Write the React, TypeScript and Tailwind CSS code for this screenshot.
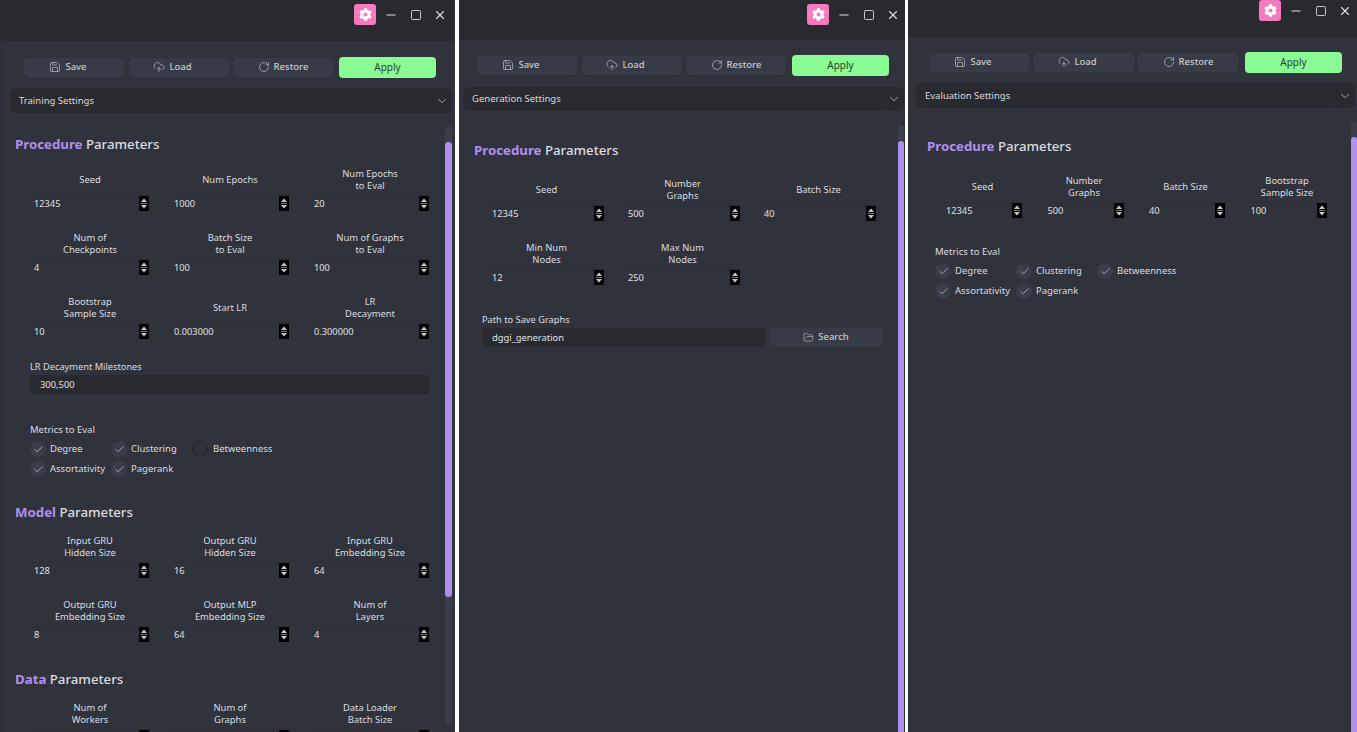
import { Check, ChevronDown, CloudUpload, FolderOpen, Minus, RotateCw, Save, Square, X } from 'lucide-react'
import { FaCog } from 'react-icons/fa'

const FONT = "font-['Noto_Sans',sans-serif]"

type Field = { label: string[]; value: string }

function Spinner() {
  return (
    <svg viewBox="0 0 10 15" className="mr-px h-[15px] w-[10px] shrink-0 bg-black">
      <path d="M5 2.5 8 6H2z" fill="#c8c8c8" />
      <path d="M2 7.5h6" stroke="#777" strokeWidth="1" />
      <path d="M5 12.5 8 9H2z" fill="#c8c8c8" />
    </svg>
  )
}

function NumberField({ label, value }: Field) {
  return (
    <div className="flex flex-col">
      <div className="flex h-6 flex-col items-center justify-center text-center text-[9.4px] leading-3 text-[#dcdde0]">
        {label.map((line) => (
          <span key={line}>{line}</span>
        ))}
      </div>
      <div className="mt-[3px] flex h-4 items-center justify-between border-t border-[#2c2f37] pl-1 text-[9.25px] text-[#e0e1e3]">
        <span>{value}</span>
        <Spinner />
      </div>
    </div>
  )
}

function Heading({ accent, className = '' }: { accent: string; className?: string }) {
  return (
    <h2 className={`h-5 text-[13.25px] leading-5 font-medium text-[#dcdde0] ${className}`}>
      <span className="font-bold text-[#b18ff0]">{accent}</span> Parameters
    </h2>
  )
}

function ToolButton({ icon, label, className = '' }: { icon: JSX.Element; label: string; className?: string }) {
  return (
    <button className={`flex h-[19px] w-[100px] items-center justify-center gap-1 rounded bg-[#373b47] pb-px text-[9.5px] font-medium text-[#c9cacd] ${className}`}>
      {icon}
      {label}
    </button>
  )
}

function Toolbar({ className, applyClass = 'ml-[1.5px]' }: { className: string; applyClass?: string }) {
  return (
    <div className={`flex items-center gap-[4.5px] ${className}`}>
      <ToolButton icon={<Save size={12} strokeWidth={1.3} />} label="Save" className="pr-[12px]" />
      <ToolButton icon={<CloudUpload size={12} strokeWidth={1.3} />} label="Load" className="pr-[12px]" />
      <ToolButton icon={<RotateCw size={12} strokeWidth={1.3} />} label="Restore" />
      <button className={`flex h-[21px] w-[97px] items-center justify-center rounded-sm bg-[#89fc93] text-[10px] text-[#2b3b30] ${applyClass}`}>
        Apply
      </button>
    </div>
  )
}

function TitleBar({ className }: { className: string }) {
  return (
    <div className={`flex shrink-0 justify-end bg-[#282a2f] text-[#e2e2e4] ${className}`}>
      <div className="flex h-[21px] w-[22px] items-center justify-center rounded-[3px] bg-[#f57ac0]">
        <FaCog size={13} color="#ffffff" />
      </div>
      <div className="ml-2 flex h-[21px] items-center gap-[10.5px]">
        <Minus size={14} strokeWidth={2} />
        <Square size={12} strokeWidth={1.7} className="mx-px" />
        <X size={14} strokeWidth={1.9} />
      </div>
    </div>
  )
}

function Combo({ label, className }: { label: string; className: string }) {
  return (
    <div className={`flex shrink-0 items-center rounded-md bg-[#282a2f] text-[9.5px] text-[#d8d9dc] ${className}`}>
      <span className="flex-1 pt-px pl-[9px]">{label}</span>
      <span className="flex h-full w-[22px] items-center justify-center border-l border-[#2c2f35]">
        <ChevronDown size={14} strokeWidth={1.3} className="text-[#d0d1d4]" />
      </span>
    </div>
  )
}

function Metric({ label, checked = true }: { label: string; checked?: boolean }) {
  return (
    <div className="flex h-4 items-center gap-1 text-[9.5px] text-[#dcdde0]">
      {checked ? (
        <span className="flex h-4 w-4 items-center justify-center rounded-full bg-[#393d49]">
          <Check size={11} strokeWidth={1.3} className="text-[#f0f0f2]" />
        </span>
      ) : (
        <span className="mr-px h-4 w-4 rounded-full border-2 border-[#292c33]" />
      )}
      <span className="whitespace-nowrap">{label}</span>
    </div>
  )
}

function Metrics({ betweenness = true, className }: { betweenness?: boolean; className: string }) {
  return (
    <div className={className}>
      <p className="h-3 text-[9.5px] leading-3 text-[#dcdde0]">Metrics to Eval</p>
      <div className="mt-[5px] grid grid-cols-[81px_81px_81px] gap-y-1">
        <Metric label="Degree" />
        <Metric label="Clustering" />
        <Metric label="Betweenness" checked={betweenness} />
        <Metric label="Assortativity" />
        <Metric label="Pagerank" />
      </div>
    </div>
  )
}

// overlay scrollbar, sits on top of the scroll area
function Scrollbar({ className, thumb }: { className: string; thumb: string }) {
  return (
    <div className={`absolute rounded-full bg-[#3a3e49] ${className}`}>
      <div className={`w-full rounded-full bg-[#b18ff0] ${thumb}`} />
    </div>
  )
}

const f = (label: string, value: string): Field => ({ label: label.split('|'), value })

const procedureTraining = [
  f('Seed', '12345'), f('Num Epochs', '1000'), f('Num Epochs|to Eval', '20'),
  f('Num of|Checkpoints', '4'), f('Batch Size|to Eval', '100'), f('Num of Graphs|to Eval', '100'),
  f('Bootstrap|Sample Size', '10'), f('Start LR', '0.003000'), f('LR|Decayment', '0.300000'),
]
const model = [
  f('Input GRU|Hidden Size', '128'), f('Output GRU|Hidden Size', '16'), f('Input GRU|Embedding Size', '64'),
  f('Output GRU|Embedding Size', '8'), f('Output MLP|Embedding Size', '64'), f('Num of|Layers', '4'),
]
const data = [f('Num of|Workers', ''), f('Num of|Graphs', ''), f('Data Loader|Batch Size', '')]
const generation = [
  f('Seed', '12345'), f('Number|Graphs', '500'), f('Batch Size', '40'),
  f('Min Num|Nodes', '12'), f('Max Num|Nodes', '250'),
]
const evaluation = [f('Seed', '12345'), f('Number|Graphs', '500'), f('Batch Size', '40'), f('Bootstrap|Sample Size', '100')]

function Fields({ items, className }: { items: Field[]; className: string }) {
  return (
    <div className={`grid gap-y-[21px] ${className}`}>
      {items.map((item) => (
        <NumberField key={item.label.join()} {...item} />
      ))}
    </div>
  )
}

function TrainingWindow() {
  return (
    <section className="flex h-full w-[455px] shrink-0 flex-col bg-[#30333c] shadow-[inset_3px_0_0_#2e3039]">
      <TitleBar className="h-[41px] pt-1 pr-2" />
      <Toolbar className="pt-4 pl-6" />
      <Combo label="Training Settings" className="mt-[10px] mr-[3px] ml-[10px] h-[25px]" />
      <div className="relative min-h-0 flex-1 overflow-hidden">
        <Heading accent="Procedure" className="mt-[21px] ml-[15px]" />
        <Fields items={procedureTraining} className="mt-[14px] ml-[30px] w-[400px] grid-cols-[120px_120px_120px] gap-x-5" />
        <div className="mt-[22px] ml-[30px] w-[400px]">
          <p className="h-3 text-[9.25px] leading-3 text-[#dcdde0]">LR Decayment Milestones</p>
          <div className="mt-[2px] flex h-[19px] items-center rounded bg-[#282a2f] pt-px pl-[10px] text-[9.35px] text-[#e0e1e3]">300,500</div>
        </div>
        <Metrics betweenness={false} className="mt-[30px] ml-[30px]" />
        <Heading accent="Model" className="mt-[25px] ml-[15px]" />
        <Fields items={model} className="mt-[13px] ml-[30px] w-[400px] grid-cols-[120px_120px_120px] gap-x-5" />
        <Heading accent="Data" className="mt-[27px] ml-[15px]" />
        <Fields items={data} className="mt-[13px] ml-[30px] w-[400px] grid-cols-[120px_120px_120px] gap-x-5" />
        <Scrollbar className="top-[13px] right-[3px] h-[599px] w-[7px]" thumb="mt-4 h-[455px]" />
      </div>
    </section>
  )
}

function GenerationWindow() {
  return (
    <section className="ml-1 flex h-full w-[446px] shrink-0 flex-col bg-[#30333c]">
      <TitleBar className="h-10 pt-1 pr-[5px]" />
      <Toolbar className="pt-[15px] pl-[18px]" />
      <Combo label="Generation Settings" className="mt-[11px] mr-px ml-1 h-6" />
      <div className="relative min-h-0 flex-1 overflow-hidden">
        <Heading accent="Procedure" className="mt-[29px] ml-[15px]" />
        <Fields items={generation} className="mt-[18px] ml-[29px] w-[389px] grid-cols-[117px_117px_117px] gap-x-[19px]" />
        <div className="mt-[29px] ml-[23px] w-[401px]">
          <p className="h-3 text-[9.25px] leading-3 text-[#dcdde0]">Path to Save Graphs</p>
          <div className="mt-[2px] flex gap-1">
            <div className="flex h-[19px] w-[283px] items-center rounded bg-[#282a2f] pt-px pl-[10px] text-[9.35px] text-[#e0e1e3]">dggi_generation</div>
            <button className="flex h-[19px] w-[114px] items-center justify-center gap-1 rounded bg-[#373b47] text-[9.5px] font-medium text-[#c9cacd]">
              <FolderOpen size={11} strokeWidth={1.3} />
              Search
            </button>
          </div>
        </div>
        <Scrollbar className="top-[14px] right-[1px] bottom-[7px] w-[6px]" thumb="mt-4 h-full" />
      </div>
    </section>
  )
}

function EvaluationWindow() {
  return (
    <section className="ml-[3px] flex h-full w-[449px] shrink-0 flex-col bg-[#30333c]">
      <TitleBar className="h-[37px] pr-[5px]" />
      <Toolbar className="pt-[15px] pl-[21px]" applyClass="ml-[2.5px]" />
      <Combo label="Evaluation Settings" className="mt-[10px] mr-[2px] ml-2 h-[25px] pt-px" />
      <div className="relative min-h-0 flex-1 overflow-hidden">
        <Heading accent="Procedure" className="mt-[28px] ml-[19px]" />
        <Fields items={evaluation} className="mt-[19px] ml-[34px] w-[385px] grid-cols-[81px_81px_81px_81px] gap-x-[20.5px]" />
        <Metrics className="mt-[28px] ml-[27px]" />
        <Scrollbar className="top-[13px] right-0 bottom-[7px] w-[6px]" thumb="mt-4 h-full" />
      </div>
    </section>
  )
}

export default function App() {
  return (
    <div className={`flex h-[732px] w-[1357px] overflow-hidden bg-white ${FONT}`}>
      <TrainingWindow />
      <GenerationWindow />
      <EvaluationWindow />
    </div>
  )
}
